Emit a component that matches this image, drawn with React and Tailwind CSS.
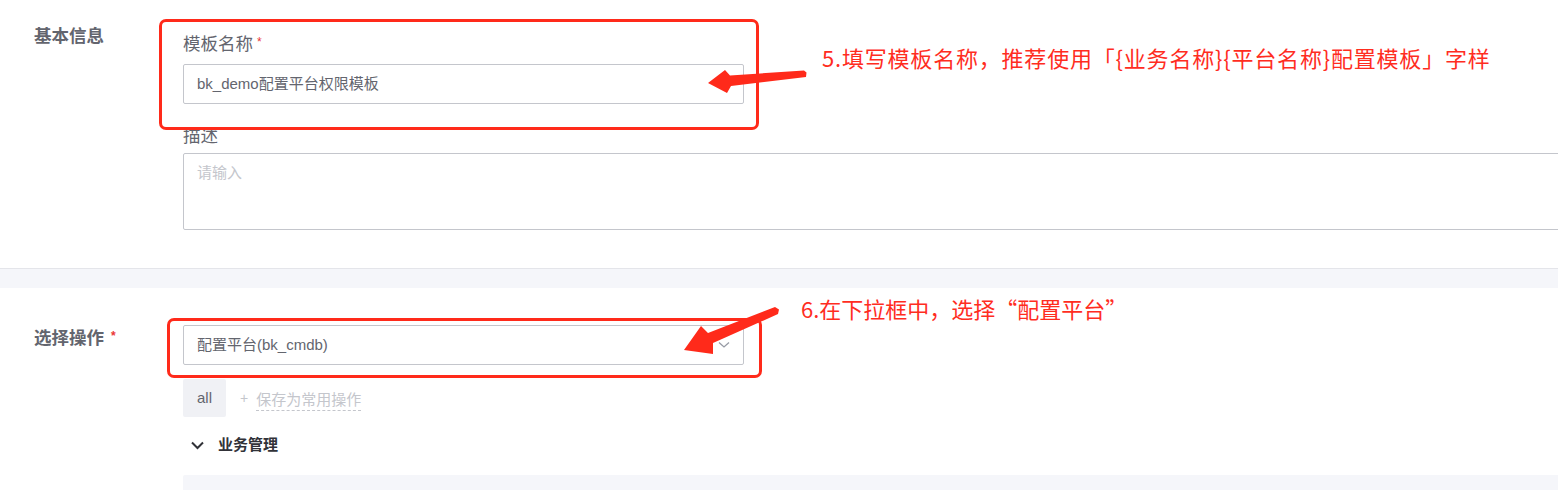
import React from "react";

const FONT = { fontFamily: '"Liberation Sans", "Noto Sans CJK SC", sans-serif' };

function Star({ gap = "ml-[4px]" }) {
  return <span className={`${gap} text-[12px] leading-none text-[#ea3636] relative top-[-2px]`}>*</span>;
}

export default function App() {
  return (
    <div className="relative w-[1558px] h-[490px] overflow-hidden bg-white" style={FONT}>
      {/* Section 1 */}
      <div className="flex h-[268px] bg-white">
        <div className="w-[183px] shrink-0 pl-[34px] pt-[24px]">
          <div className="text-[17.5px] leading-[24px] font-semibold text-[#63656e]">基本信息</div>
        </div>
        <div className="flex flex-col pt-[33px]">
          <div className="flex items-center h-[22px] text-[17.5px] leading-[22px] text-[#63656e]">
            模板名称<Star />
          </div>
          <div className="mt-[9px] w-[561px] h-[40px] border border-[#c4c6cc] rounded-[2px] px-[13px] flex items-center text-[15px] text-[#63656e]">
            bk_demo配置平台权限模板
          </div>
          <div className="mt-[21px] h-[22px] text-[17.5px] leading-[22px] text-[#63656e]">描述</div>
          <div className="mt-[6px] w-[1400px] h-[77px] border border-[#c4c6cc] rounded-[2px] px-[13px] pt-[8px] text-[15px] leading-[22px] text-[#c4c6cc]">
            请输入
          </div>
        </div>
      </div>

      {/* Gray band */}
      <div className="h-[20px] bg-[#f5f6fa] border-t border-[#e4e5ea]" />

      {/* Section 2 */}
      <div className="flex bg-white pt-[37px]">
        <div className="w-[183px] shrink-0 pl-[34px] pt-[1px]">
          <div className="flex items-center text-[17.5px] leading-[24px] font-semibold text-[#63656e]">
            选择操作<Star gap="ml-[7px]" />
          </div>
        </div>
        <div className="flex flex-col">
          <div className="w-[561px] h-[40px] border border-[#c4c6cc] rounded-[2px] pl-[13px] pr-[13px] flex items-center justify-between text-[15px] text-[#63656e]">
            <span>配置平台(bk_cmdb)</span>
            <svg width="12" height="8" viewBox="0 0 12 8" fill="none">
              <polyline points="1,1.5 6,6 11,1.5" stroke="#979ba5" strokeWidth="1.3" />
            </svg>
          </div>
          <div className="mt-[14px] flex items-center h-[38px]">
            <div className="w-[43px] h-[38px] rounded-[2px] bg-[#f0f1f5] flex items-center justify-center text-[15px] text-[#63656e]">
              all
            </div>
            <span className="ml-[14px] text-[14px] text-[#c4c6cc]">+</span>
            <span className="ml-[8px] text-[15px] leading-[20px] text-[#c4c6cc] border-b border-dashed border-[#c4c6cc] mt-[4px]">
              保存为常用操作
            </span>
          </div>
          <div className="mt-[17px] flex items-center h-[22px]">
            <svg width="13" height="9" viewBox="0 0 13 9" fill="none" className="ml-[8px]">
              <polyline points="1,1.5 6.5,7 12,1.5" stroke="#313238" strokeWidth="2" />
            </svg>
            <span className="ml-[14px] text-[15px] leading-[22px] font-bold text-[#313238]">业务管理</span>
          </div>
          <div className="mt-[19px] w-[1400px] h-[40px] bg-[#f5f6fa] rounded-[2px]" />
        </div>
      </div>

      {/* Annotation overlays */}
      <div className="absolute left-[159px] top-[19px] w-[600px] h-[111px] border-[3px] border-[#ff2a1a] rounded-[7px] pointer-events-none" />
      <div className="absolute left-[167px] top-[318px] w-[595px] h-[60px] border-[3px] border-[#ff2a1a] rounded-[7px] pointer-events-none" />

      <div className="absolute left-[822px] top-[43px] text-[22px] leading-[28px] tracking-[0.8px] text-[#ff2d1f] whitespace-nowrap" style={{ fontFamily: '"Noto Sans CJK SC", sans-serif' }}>
        5.填写模板名称，推荐使用「{"{"}业务名称{"}"}{"{"}平台名称{"}"}配置模板」字样
      </div>
      <div className="absolute left-[801px] top-[294px] text-[22px] leading-[28px] text-[#ff2d1f] whitespace-nowrap" style={{ fontFamily: '"Noto Sans CJK SC", sans-serif' }}>
        6.在下拉框中，选择“配置平台”
      </div>

      <svg className="absolute left-0 top-0 pointer-events-none" width="1558" height="490" viewBox="0 0 1558 490">
        <polygon
          fill="#ff2a1a"
          points="708,83 725,70 730,75.5 804,70.5 806.5,72.5 806,77 731,86 727,93"
        />
        <polygon
          fill="#ff2a1a"
          points="684,350 701,326 708,333 775,307 779,309.5 778,314 713,343 713,354"
        />
      </svg>
    </div>
  );
}
